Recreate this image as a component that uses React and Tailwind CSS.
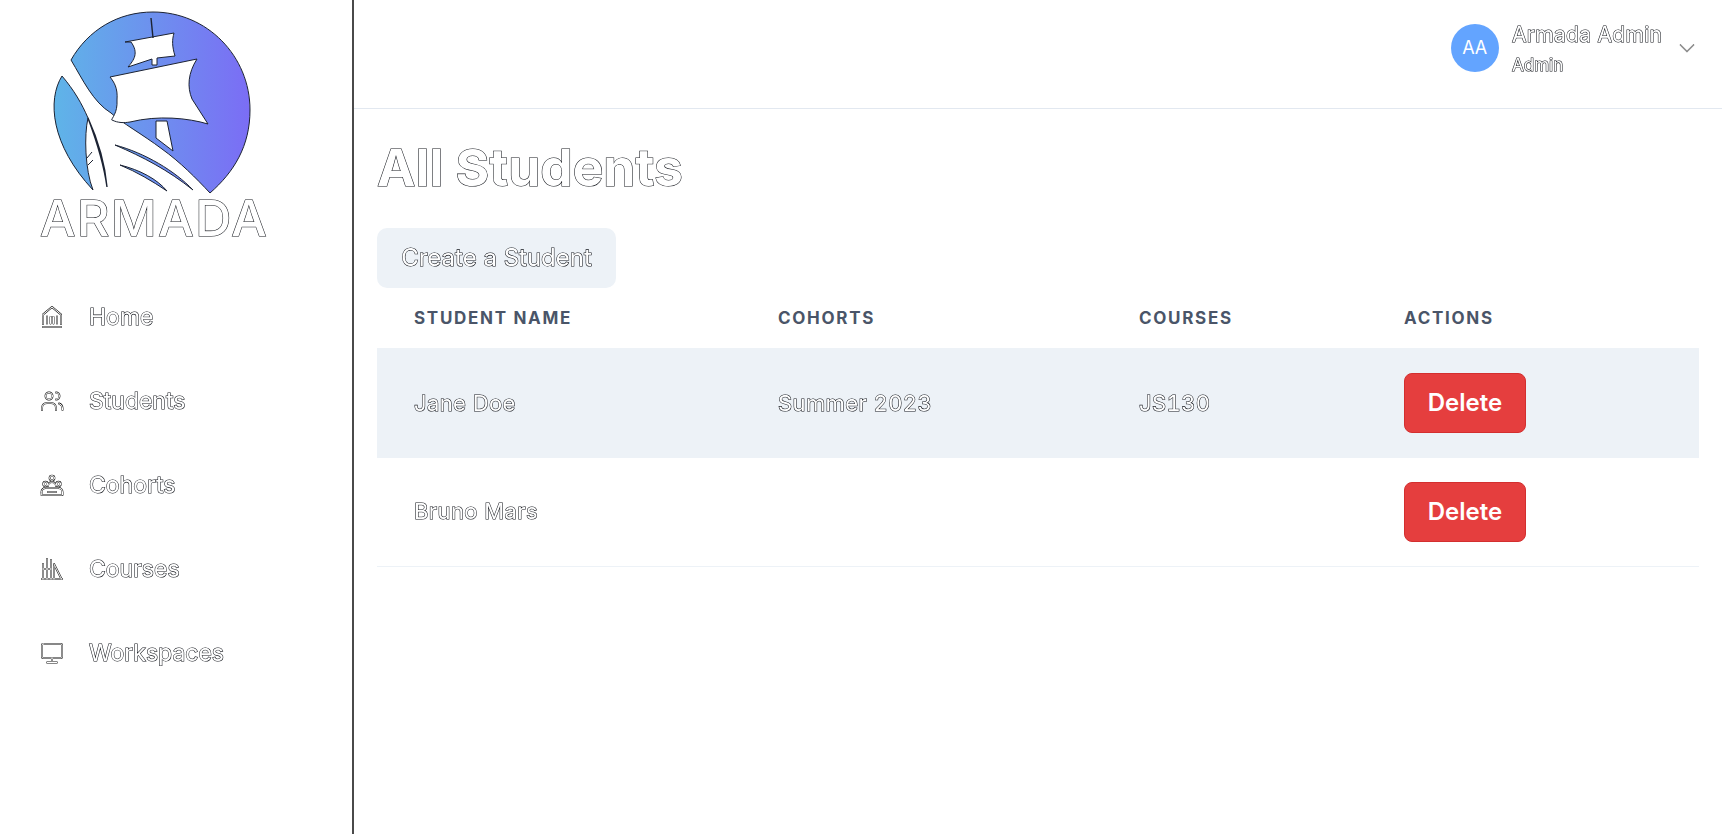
const outline = "text-white [-webkit-text-stroke:1.1px_#0f1218] [paint-order:stroke_fill] [will-change:transform]";

function Duo({ children, size = 24, vb = "0 0 24 24", className = "" }) {
  return (
    <svg width={size} height={size} viewBox={vb} fill="none" strokeLinecap="round" strokeLinejoin="round" className={className}>
      <g stroke="#111" strokeWidth="1.9">{children}</g>
      <g stroke="#fff" strokeWidth="1">{children}</g>
    </svg>
  );
}

const HomeI = () => (
  <Duo>
    <path d="M3 9.5 12 2l9 7.5V19M3 9.5V19" />
    <path d="M7 11.5v7M10.5 12h3M10.5 12v6.5M13.5 12v6.5M17 11.5v7" />
    <path d="M3 22h18" />
  </Duo>
);
const StudentsI = () => (
  <Duo>
    <circle cx="9" cy="7" r="3.5" />
    <path d="M2 21v-2a5 5 0 0 1 5-5h4a5 5 0 0 1 5 5v2" />
    <path d="M16 3.5a3.5 3.5 0 0 1 0 7M19 14.5a5 5 0 0 1 3.5 4.5v2" />
  </Duo>
);
const CohortsI = () => (
  <Duo>
    <circle cx="12" cy="5" r="2.4" />
    <circle cx="5.5" cy="11" r="2.2" />
    <circle cx="18.5" cy="11" r="2.2" />
    <path d="M8 13a4 4 0 0 1 8 0" />
    <path d="M1.5 19a4 4 0 0 1 4-4h13a4 4 0 0 1 4 4v3h-21z" />
    <path d="M8 19h8" />
  </Duo>
);
const CoursesI = () => (
  <Duo>
    <path d="M3 7v15M7 2v20M11 3v19M2 22h20" />
    <path d="M3 12h8" />
    <path d="m14 7 7.5 15M14 9v13" />
  </Duo>
);
const MonitorI = () => (
  <Duo>
    <rect x="2" y="3" width="20" height="14" rx="1" />
    <path d="M12 17v4M7 21.5h10" />
  </Duo>
);

const Logo = () => (
  <svg width="354" height="196" viewBox="0 0 354 196" className="block">
    <defs>
      <linearGradient id="lg" x1="55" y1="0" x2="250" y2="0" gradientUnits="userSpaceOnUse">
        <stop offset="0" stopColor="#5fb4e8" />
        <stop offset="1" stopColor="#7b6df5" />
      </linearGradient>
    </defs>
    <g stroke="#1c2333" strokeWidth="1" fill="url(#lg)">
      <path d="M71 60C88 30 118 12 153 12c54 0 97 44 97 98 0 36-16 62-40 83-14-15-30-31-48-44-20-15-40-26-51-36C93 102 83 80 71 60Z" />
      <path d="M62 76C47 100 51 145 93 190 85 170 84 135 88 118 82 104 74 90 62 76Z" />
      <path d="M88 118C98 140 105 165 107 187 104 165 97 142 88 118Z" strokeWidth="1.4" />
      <path d="M115 145c30 8 60 26 78 45-25-20-50-33-78-45Z" />
      <path d="M120 165c20 5 37 14 47 26-15-10-30-19-47-26Z" />
    </g>
    <g fill="#fff" stroke="#1c2333" strokeWidth="1">
      <path d="M125 42 174 33c-2 7-2 13 1 23l-18 2v7h-5v-6l-24 8c6-7 11-14 3-25Z" />
      <path d="M110 77 197 59c-9 14-10 28-5 40l16 25c-20-6-50-9-78-2-6 1-12 1-18-2-2 0 6-6 5-20 1-12-3-18-7-23Z" />
      <path d="m156 121 11 0 6 30-17-13Z" />
    </g>
    <path d="M151 18l2 20" stroke="#1c2333" strokeWidth="1.4" />
    <path d="M87 158l5-6M88 165l5-5" stroke="#1c2333" strokeWidth="1" />
  </svg>
);

const nav = [
  ["Home", HomeI],
  ["Students", StudentsI],
  ["Cohorts", CohortsI],
  ["Courses", CoursesI],
  ["Workspaces", MonitorI],
];

const DeleteBtn = () => (
  <button className="h-[60px] w-[122px] rounded-lg border border-[#d32f2f] bg-[#e53e3e] text-[24px] font-semibold text-white">Delete</button>
);

const td = `pl-[37px] pr-9 align-middle text-[22px] tracking-[0.4px] tabular-nums ${outline}`;

export default function App() {
  return (
    <div className="flex h-[834px] w-full bg-white font-['Inter',sans-serif] overflow-hidden">
      <aside className="w-[354px] shrink-0 border-r-2 border-[#4a4a4a]">
        <Logo />
        <div className={`ml-[40px] -mt-[4px] text-[50px] leading-[52px] tracking-[1.6px] font-medium ${outline}`}>ARMADA</div>
        <nav className="mt-[57px] flex flex-col gap-[52px] pl-[40px]">
          {nav.map(([label, Icon]) => (
            <div key={label} className="flex h-[32px] items-center">
              <div className="w-[49px]"><Icon /></div>
              <span className={`text-[23px] ${outline}`}>{label}</span>
            </div>
          ))}
        </nav>
      </aside>
      <main className="min-w-0 flex-1">
        <header className="flex h-[109px] items-center justify-end border-b border-[#e2e8f0] pr-[27px] pb-[13px]">
          <div className="flex h-12 w-12 items-center justify-center rounded-full bg-[#63a4ff] text-[18px] text-white">AA</div>
          <div className="ml-[13px] mt-[4px] flex flex-col">
            <span className={`text-[21px] leading-[30px] tracking-[0.3px] ${outline}`}>Armada Admin</span>
            <span className={`text-[17px] leading-[30px] ${outline}`}>Admin</span>
          </div>
          <svg width="16" height="10" viewBox="0 0 16 10" fill="none" className="ml-[17px]">
            <path d="M1 1.5 8 8.5 15 1.5" stroke="#555" strokeWidth="1.4" />
            <path d="M1 1.5 8 8.5 15 1.5" stroke="#fff" strokeWidth="0.6" />
          </svg>
        </header>
        <div className="pl-[23px] pr-[23px]">
          <h1 className={`mt-[29px] text-[51.5px] leading-[58px] font-bold ${outline}`}>All Students</h1>
          <button className={`mt-[32px] h-[60px] w-[239px] rounded-[10px] bg-[#edf2f7] text-[24px] ${outline}`}>Create a Student</button>
          <table className="w-full table-fixed border-collapse">
            <colgroup>
              <col className="w-[364px]" />
              <col className="w-[361px]" />
              <col className="w-[265px]" />
              <col />
            </colgroup>
            <thead>
              <tr className="h-[60px]">
                {["Student Name", "Cohorts", "Courses", "Actions"].map((h) => (
                  <th key={h} className="pl-[37px] pr-9 pt-[2px] text-left text-[17px] font-bold uppercase tracking-[1.7px] text-[#4a5568]">{h}</th>
                ))}
              </tr>
            </thead>
            <tbody>
              <tr className="h-[110px] bg-[#edf2f7]">
                <td className={td}>Jane Doe</td>
                <td className={td}>Summer 2023</td>
                <td className={td}>JS130</td>
                <td className="pl-[37px] pr-9"><DeleteBtn /></td>
              </tr>
              <tr className="h-[108px] border-b border-[#edf2f7]">
                <td className={td}>Bruno Mars</td>
                <td className={td}></td>
                <td className={td}></td>
                <td className="pl-[37px] pr-9"><DeleteBtn /></td>
              </tr>
            </tbody>
          </table>
        </div>
      </main>
    </div>
  );
}
